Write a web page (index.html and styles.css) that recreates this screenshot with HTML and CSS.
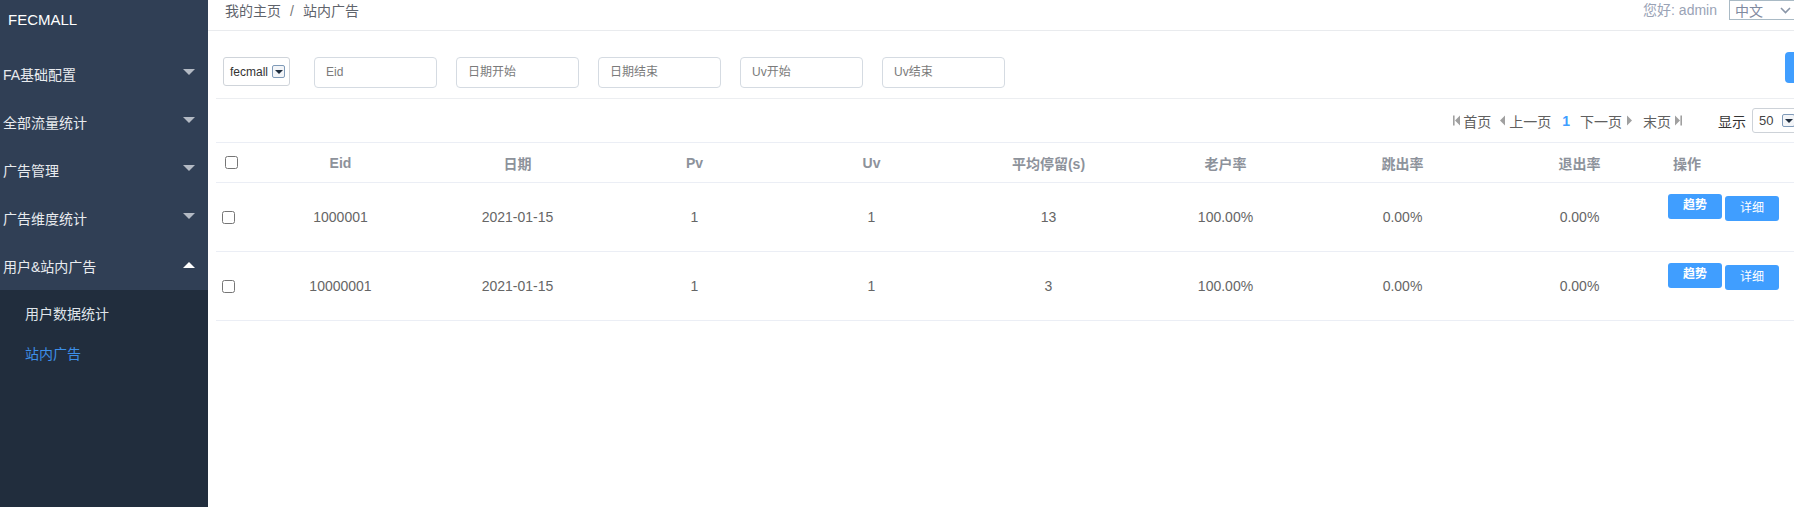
FILE: index.html
```html
<!DOCTYPE html>
<html lang="zh">
<head>
<meta charset="utf-8">
<title>站内广告</title>
<link rel="stylesheet" href="styles.css">
</head>
<body>
<div class="app">
  <aside class="sidebar">
    <div class="logo">FECMALL</div>
    <ul class="menu">
      <li class="menu-item"><span>FA基础配置</span><i class="arrow-down"></i></li>
      <li class="menu-item"><span>全部流量统计</span><i class="arrow-down"></i></li>
      <li class="menu-item"><span>广告管理</span><i class="arrow-down"></i></li>
      <li class="menu-item"><span>广告维度统计</span><i class="arrow-down"></i></li>
      <li class="menu-item"><span>用户&amp;站内广告</span><i class="arrow-up"></i></li>
    </ul>
    <ul class="submenu">
      <li class="sub-item">用户数据统计</li>
      <li class="sub-item active">站内广告</li>
    </ul>
  </aside>
  <main class="main">
    <header class="topbar">
      <div class="crumbs">我的主页<span class="sep">/</span>站内广告</div>
      <div class="user">
        <span class="hello">您好: admin</span>
        <div class="lang"><span>中文</span><svg class="chev" width="11" height="7" viewBox="0 0 11 7"><path d="M1 1l4.5 4.5L10 1" fill="none" stroke="#8a96a8" stroke-width="1.6"/></svg></div>
      </div>
    </header>
    <section class="content">
      <div class="filters">
        <div class="fselect"><span>fecmall</span><span class="dd"><i></i></span></div>
        <div class="finput">Eid</div>
        <div class="finput">日期开始</div>
        <div class="finput">日期结束</div>
        <div class="finput">Uv开始</div>
        <div class="finput">Uv结束</div>
        <div class="search-btn"></div>
      </div>
      <div class="pager">
        <svg class="p-first" width="7" height="11" viewBox="0 0 7 11"><rect x="0" y="0.5" width="1.6" height="10" fill="#a0a0a0"/><path d="M7 0.5v10L2 5.5z" fill="#a0a0a0"/></svg>
        <span class="t-first">首页</span>
        <svg class="p-prev" width="5" height="11" viewBox="0 0 5 11"><path d="M5 0.5v10L0 5.5z" fill="#a0a0a0"/></svg>
        <span class="t-prev">上一页</span>
        <span class="pcur">1</span>
        <span class="t-next">下一页</span>
        <svg class="p-next" width="5" height="11" viewBox="0 0 5 11"><path d="M0 0.5v10L5 5.5z" fill="#a0a0a0"/></svg>
        <span class="t-last">末页</span>
        <svg class="p-last" width="7" height="11" viewBox="0 0 7 11"><path d="M0 0.5v10L5 5.5z" fill="#a0a0a0"/><rect x="5.4" y="0.5" width="1.6" height="10" fill="#a0a0a0"/></svg>
        <span class="show">显示</span>
        <div class="psize"><span>50</span><span class="dd"><i></i></span></div>
      </div>
      <table class="grid">
        <colgroup>
          <col class="c-check">
          <col class="c-data"><col class="c-data"><col class="c-data"><col class="c-data">
          <col class="c-data"><col class="c-data"><col class="c-data"><col class="c-data">
          <col>
        </colgroup>
        <thead>
          <tr>
            <th class="chk"><input type="checkbox"></th>
            <th>Eid</th><th>日期</th><th>Pv</th><th>Uv</th><th>平均停留(s)</th><th>老户率</th><th>跳出率</th><th>退出率</th>
            <th class="ops">操作</th>
          </tr>
        </thead>
        <tbody>
          <tr>
            <td class="chk"><input type="checkbox"></td>
            <td>1000001</td><td>2021-01-15</td><td>1</td><td>1</td><td>13</td><td>100.00%</td><td>0.00%</td><td>0.00%</td>
            <td class="ops"><div class="btns"><span class="btn b1">趋势</span><span class="btn b2">详细</span></div></td>
          </tr>
          <tr>
            <td class="chk"><input type="checkbox"></td>
            <td>10000001</td><td>2021-01-15</td><td>1</td><td>1</td><td>3</td><td>100.00%</td><td>0.00%</td><td>0.00%</td>
            <td class="ops"><div class="btns"><span class="btn b1">趋势</span><span class="btn b2">详细</span></div></td>
          </tr>
        </tbody>
      </table>
    </section>
  </main>
</div>
</body>
</html>
```

FILE: styles.css
```css
* { box-sizing: border-box; }
html, body { margin: 0; padding: 0; }
body {
  font-family: "Liberation Sans", Arial, "Noto Sans CJK SC", sans-serif;
  background: #fff;
  overflow: hidden;
  width: 1794px;
  height: 507px;
}
ul { list-style: none; margin: 0; padding: 0; }

.app { display: flex; height: 507px; }

/* sidebar */
.sidebar {
  width: 208px;
  flex: none;
  background: #212d3d;
  display: flex;
  flex-direction: column;
}
.logo {
  background: #303f55;
  height: 50px;
  padding: 10px 0 0 8px;
  color: #fff;
  font-size: 15px;
  line-height: 20px;
}
.menu { background: #303f55; }
.menu-item {
  height: 48px;
  display: flex;
  align-items: center;
  justify-content: space-between;
  padding: 0 13px 0 3px;
  color: #e8ebef;
  font-size: 14px;
}
.arrow-down {
  width: 0; height: 0;
  border-left: 6px solid transparent;
  border-right: 6px solid transparent;
  border-top: 6px solid #b3bac4;
  margin-top: -4px;
}
.arrow-up {
  width: 0; height: 0;
  border-left: 6px solid transparent;
  border-right: 6px solid transparent;
  border-bottom: 6px solid #ffffff;
  margin-top: -2px;
}
.submenu { padding-top: 4px; }
.sub-item {
  height: 40px;
  line-height: 40px;
  padding-left: 25px;
  font-size: 14px;
  color: #dfe4ea;
}
.sub-item.active { color: #3d8fe8; }

/* main */
.main {
  flex: 1;
  min-width: 0;
  overflow: hidden;
  display: flex;
  flex-direction: column;
}
.topbar {
  height: 31px;
  flex: none;
  border-bottom: 1px solid #e9ebee;
  display: flex;
  justify-content: space-between;
  align-items: flex-start;
}
.crumbs {
  padding-left: 17px;
  line-height: 22px;
  font-size: 14px;
  color: #5f646c;
}
.sep { margin: 0 9px; color: #777; }
.user {
  display: flex;
  align-items: flex-start;
  margin-right: -5px;
}
.hello {
  font-size: 14px;
  line-height: 21px;
  color: #9aa3b6;
  margin-right: 12px;
}
.lang {
  width: 70px;
  height: 20px;
  border: 1px solid #a9bac5;
  display: flex;
  align-items: center;
  justify-content: space-between;
  padding: 0 7px 0 5px;
  font-size: 14px;
  color: #7f8aa0;
}
.chev { flex: none; }

.content {
  padding-left: 8px;
}
.filters {
  height: 68px;
  border-bottom: 1px solid #eceef1;
  display: flex;
  align-items: flex-start;
  padding: 26px 0 0 7px;
}
.fselect {
  width: 67px;
  height: 29px;
  border: 1px solid #cfd4da;
  border-radius: 3px;
  display: flex;
  align-items: center;
  justify-content: space-between;
  padding: 0 4px 0 6px;
  font-size: 12px;
  color: #333;
  margin-right: 24px;
}
.dd {
  width: 13px;
  height: 13px;
  border: 1px solid #7f9ab8;
  border-radius: 2px;
  background: #f3f5f8;
  display: flex;
  align-items: center;
  justify-content: center;
  flex: none;
}
.dd i {
  width: 0; height: 0;
  border-left: 4px solid transparent;
  border-right: 4px solid transparent;
  border-top: 4px solid #1f2d3d;
}
.finput {
  width: 123px;
  height: 31px;
  border: 1px solid #d5dbe2;
  border-radius: 4px;
  padding-left: 11px;
  font-size: 12px;
  line-height: 29px;
  color: #7b7b7b;
  margin-right: 19px;
}
.search-btn {
  margin-left: auto;
  margin-top: -5px;
  width: 60px;
  height: 31px;
  border-radius: 4px;
  background: #409eff;
  margin-right: -51px;
  flex: none;
}

.pager {
  height: 43px;
  display: flex;
  align-items: center;
  justify-content: flex-end;
  font-size: 14px;
  color: #606060;
  margin-right: -6px;
}
.pager svg { flex: none; }
.p-first { margin-right: 3px; }
.t-first { margin-right: 9px; }
.p-prev { margin-right: 4px; }
.pcur { color: #409eff; font-weight: bold; margin: 0 10px 0 11px; }
.t-next { margin-right: 5px; }
.p-next { margin-right: 11px; }
.t-last { margin-right: 4px; }
.show { color: #333; margin-left: 36px; margin-right: 6px; }
.psize {
  width: 48px;
  height: 25px;
  border: 1px solid #cdd2d8;
  border-radius: 3px;
  display: flex;
  align-items: center;
  padding-left: 6px;
  font-size: 13px;
  color: #444;
  gap: 9px;
}

/* table */
.grid {
  width: 100%;
  border-collapse: collapse;
  table-layout: fixed;
  border-top: 1px solid #ebeef5;
}
.c-check { width: 36px; }
.c-data { width: 177px; }
.grid th {
  height: 40px;
  font-size: 14px;
  font-weight: bold;
  color: #8d929b;
  text-align: center;
  border-bottom: 1px solid #ebeef5;
  padding: 0;
}
.grid td {
  height: 69px;
  font-size: 14px;
  color: #666;
  text-align: center;
  border-bottom: 1px solid #ebeef5;
  padding: 0;
}
.grid .chk { text-align: left; }
.grid th.chk { padding-left: 9px; }
.grid td.chk { padding-left: 6px; }
.chk input {
  width: 13px;
  height: 13px;
  margin: 0;
  display: block;
}
.grid th.ops { text-align: left; padding-left: 5px; }
.grid td.ops { text-align: left; vertical-align: top; padding-top: 11px; }
.btns { display: flex; align-items: flex-start; gap: 3px; }
.btn {
  width: 54px;
  height: 25px;
  border-radius: 3px;
  background: #409eff;
  color: #fff;
  font-size: 12px;
  line-height: 25px;
  text-align: center;
}
.b1 { font-weight: bold; line-height: 22px; }
.b2 { margin-top: 2px; }
```
